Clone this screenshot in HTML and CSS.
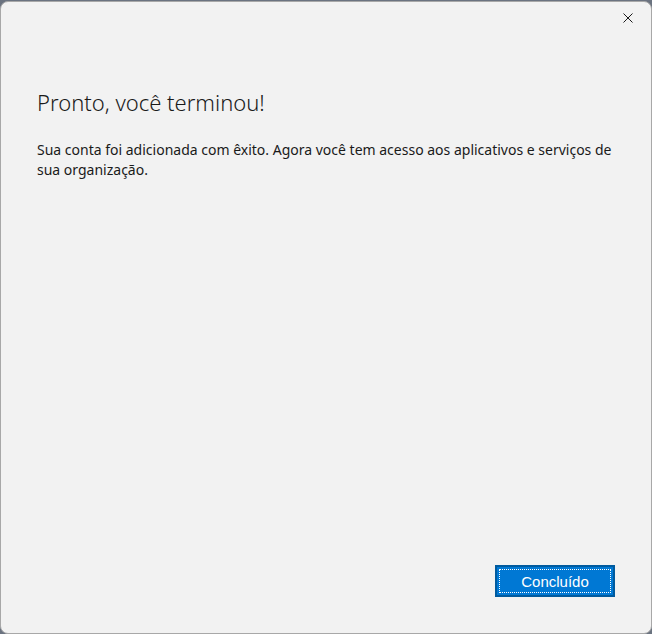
FILE: index.html
```html
<!DOCTYPE html>
<html lang="pt-BR">
<head>
<meta charset="utf-8">
<title>Pronto</title>
<link rel="stylesheet" href="styles.css">
</head>
<body>
<div class="window">
  <div class="titlebar">
    <button class="close" aria-label="Fechar">
      <svg width="10" height="10" viewBox="0 0 10 10"><path d="M0.5 0.5 L9.5 9.5 M9.5 0.5 L0.5 9.5" stroke="#1a1a1a" stroke-width="1" fill="none"/></svg>
    </button>
  </div>
  <div class="content">
    <h1 class="title">Pronto, você terminou!</h1>
    <p class="text">Sua conta foi adicionada com êxito. Agora você tem acesso aos aplicativos e serviços de sua organização.</p>
  </div>
  <div class="footer">
    <button class="primary"><span class="focus">Concluído</span></button>
  </div>
</div>
</body>
</html>
```
FILE: styles.css
```css
html, body {
  margin: 0;
  padding: 0;
  height: 100%;
}
body {
  background: #6b7380;
  font-family: "Noto Sans", "Open Sans", sans-serif;
}
.window {
  box-sizing: border-box;
  width: 652px;
  margin-top: 1px;
  height: 633px;
  background: #f2f2f2;
  border: 1px solid #a8a8a8;
  border-radius: 8px;
  display: flex;
  flex-direction: column;
}
.titlebar {
  height: 34px;
  display: flex;
  justify-content: flex-end;
  align-items: flex-start;
}
.close {
  width: 46px;
  height: 32px;
  border: 0;
  background: transparent;
  display: flex;
  align-items: center;
  justify-content: center;
  padding: 0;
}
.content {
  flex: 1;
  padding: 50px 36px 0 36px;
}
.title {
  margin: 0;
  font-weight: 300;
  font-size: 22px;
  line-height: 32px;
  color: #1a1a1a;
}
.text {
  margin: 22px 0 0 0;
  font-size: 14px;
  line-height: 20px;
  color: #1a1a1a;
}
.footer {
  display: flex;
  justify-content: flex-end;
  padding: 0 36px 36px 0;
}
.primary {
  width: 120px;
  height: 32px;
  background: #0078d4;
  border: 2px solid #005a9e;
  padding: 2px;
  box-sizing: border-box;
  display: flex;
}
.focus {
  flex: 1;
  border: 1px dotted #ffffff;
  color: #ffffff;
  font-family: inherit;
  font-size: 15px;
  display: flex;
  align-items: center;
  justify-content: center;
}
```
